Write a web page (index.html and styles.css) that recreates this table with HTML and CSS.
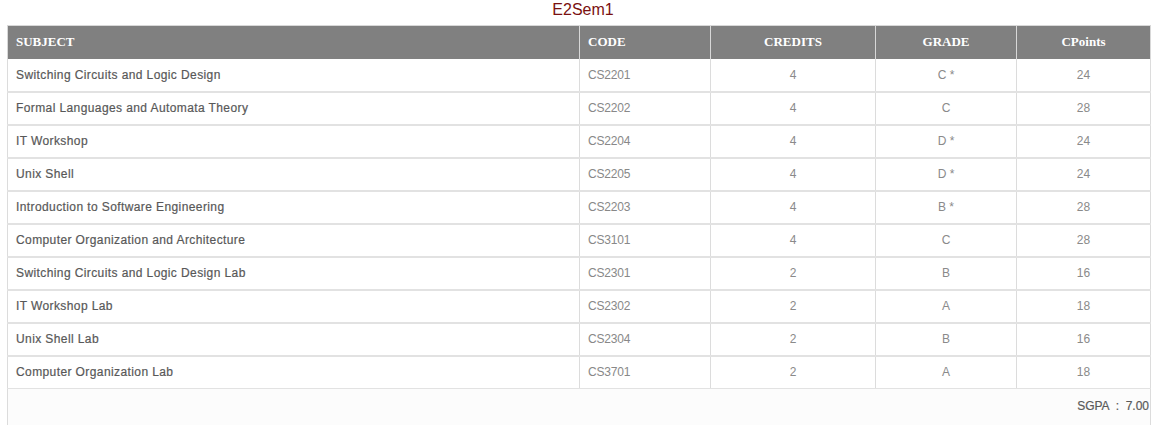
FILE: index.html
```html
<!DOCTYPE html>
<html>
<head>
<meta charset="utf-8">
<link rel="stylesheet" href="styles.css">
</head>
<body>
<div class="title">E2Sem1</div>
<table class="marks">
  <thead>
    <tr>
      <th class="c-subj">SUBJECT</th>
      <th class="c-code">CODE</th>
      <th class="c-cred">CREDITS</th>
      <th class="c-grade">GRADE</th>
      <th class="c-pts">CPoints</th>
    </tr>
  </thead>
  <tbody>
    <tr><td class="subj">Switching Circuits and Logic Design</td><td class="code">CS2201</td><td class="num">4</td><td class="num">C *</td><td class="num">24</td></tr>
    <tr><td class="subj">Formal Languages and Automata Theory</td><td class="code">CS2202</td><td class="num">4</td><td class="num">C</td><td class="num">28</td></tr>
    <tr><td class="subj">IT Workshop</td><td class="code">CS2204</td><td class="num">4</td><td class="num">D *</td><td class="num">24</td></tr>
    <tr><td class="subj">Unix Shell</td><td class="code">CS2205</td><td class="num">4</td><td class="num">D *</td><td class="num">24</td></tr>
    <tr><td class="subj">Introduction to Software Engineering</td><td class="code">CS2203</td><td class="num">4</td><td class="num">B *</td><td class="num">28</td></tr>
    <tr><td class="subj">Computer Organization and Architecture</td><td class="code">CS3101</td><td class="num">4</td><td class="num">C</td><td class="num">28</td></tr>
    <tr><td class="subj">Switching Circuits and Logic Design Lab</td><td class="code">CS2301</td><td class="num">2</td><td class="num">B</td><td class="num">16</td></tr>
    <tr><td class="subj">IT Workshop Lab</td><td class="code">CS2302</td><td class="num">2</td><td class="num">A</td><td class="num">18</td></tr>
    <tr><td class="subj">Unix Shell Lab</td><td class="code">CS2304</td><td class="num">2</td><td class="num">B</td><td class="num">16</td></tr>
    <tr><td class="subj">Computer Organization Lab</td><td class="code">CS3701</td><td class="num">2</td><td class="num">A</td><td class="num">18</td></tr>
    <tr class="sgpa"><td colspan="5">SGPA &nbsp;: &nbsp;7.00</td></tr>
  </tbody>
</table>
</body>
</html>
```

FILE: styles.css
```css
html, body {
  margin: 0;
  padding: 0;
  background: #ffffff;
}
body {
  padding: 0 8px 0 7px;
  font-family: "Liberation Sans", Arial, sans-serif;
}
.title {
  text-align: center;
  color: #7a1010;
  font-size: 16px;
  line-height: 20px;
  height: 25px;
  padding-left: 8px;
  box-sizing: border-box;
}
.marks {
  width: 100%;
  border-collapse: collapse;
  table-layout: fixed;
}
.marks th {
  background: #808080;
  color: #ffffff;
  font-family: "Liberation Serif", "Times New Roman", serif;
  font-weight: bold;
  font-size: 13px;
  height: 33px;
  padding: 0 8px;
  border-left: 1px solid #d8d8d8;
  border-right: 1px solid #d8d8d8;
  border-top: 1px solid #d8d8d8;
  text-align: center;
  box-sizing: border-box;
}
.marks th.c-subj, .marks th.c-code { text-align: left; }
.c-subj { width: 572px; }
.c-code { width: 131px; }
.c-cred { width: 165px; }
.c-grade { width: 141px; }
.marks td {
  height: 33px;
  padding: 0 8px;
  font-size: 12px;
  color: #888888;
  border-left: 1px solid #dcdcdc;
  border-right: 1px solid #dcdcdc;
  border-bottom: 2px solid #e2e2e2;
  box-sizing: border-box;
}
.marks td.subj {
  color: #585858;
  letter-spacing: 0.4px;
  -webkit-text-stroke: 0.2px #585858;
}
.marks td.code { color: #888888; letter-spacing: -0.2px; }
.marks td.num { text-align: center; color: #8a8a8a; }
.marks tr:nth-child(10) td { border-bottom: 1px solid #e2e2e2; }
.marks tr.sgpa td {
  height: 40px;
  text-align: right;
  color: #5a5a5a;
  font-size: 12px;
  background: #fcfcfc;
  border-bottom: none;
  padding-right: 1px;
  vertical-align: top;
  padding-top: 10px;
  -webkit-text-stroke: 0.2px #5a5a5a;
}
```
